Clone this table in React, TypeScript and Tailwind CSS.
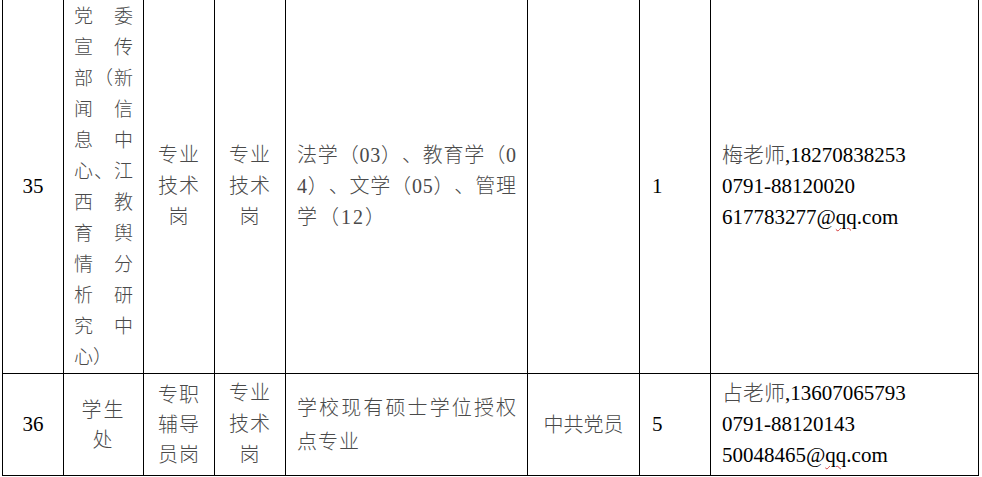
import type { ReactNode } from "react";

const zh = "text-[#4a4a4a] font-light";

function Cell({ children, className = "" }: { children?: ReactNode; className?: string }) {
  return (
    <div className={`flex items-center border-l border-b border-black ${className}`}>
      {children}
    </div>
  );
}

// stacked short lines, centred in a narrow column
function Stack({ lines, lead = "leading-[31px]" }: { lines: string[]; lead?: string }) {
  return (
    <div className={`w-full text-center text-[20px] tracking-[1px] ${lead} ${zh}`}>
      {lines.map((l) => (
        <div key={l}>{l}</div>
      ))}
    </div>
  );
}

// a full line spread char by char across the cell, as Word distributes it
function Spread({ text }: { text: string }) {
  return (
    <div className="flex justify-between whitespace-nowrap">
      {Array.from(text).map((c, i) => (
        <span key={i}>{c}</span>
      ))}
    </div>
  );
}

function Contact({ name, mobile, phone, mail }: { name: string; mobile: string; phone: string; mail: string }) {
  return (
    <div className="text-[21px] leading-[31px] text-black">
      <div>
        <span className={zh}>{name}</span>,{mobile}
      </div>
      <div>{phone}</div>
      <div>
        {mail}@
        <span className="underline decoration-wavy decoration-[#d23a3a] decoration-1 underline-offset-[3px]">qq</span>
        .com
      </div>
    </div>
  );
}

export default function App() {
  const deptLines = ["党委", "宣传", "部（新", "闻信", "息中", "心、江", "西教", "育舆", "情分", "析研", "究中"];

  return (
    <div className="w-[982px] h-[477px] bg-white pl-[2px] font-['Liberation_Serif','Noto_Sans_CJK_SC',serif]">
      <div className="grid w-[977px] grid-cols-[61px_80px_71px_71px_242px_112px_71px_269px] grid-rows-[374px_102px]">
        {/* row 35 */}
        <Cell className="justify-center text-[21px]">35</Cell>
        <Cell className="px-[10px]">
          <div className={`w-full text-[19px] leading-[31px] ${zh}`}>
            {deptLines.map((l) => (
              <Spread key={l} text={l} />
            ))}
            <div>心）</div>
          </div>
        </Cell>
        <Cell>
          <Stack lines={["专业", "技术", "岗"]} />
        </Cell>
        <Cell>
          <Stack lines={["专业", "技术", "岗"]} />
        </Cell>
        <Cell className="px-[11px]">
          <div className={`w-full text-[20px] leading-[31px] ${zh}`}>
            <Spread text="法学（03）、教育学（0" />
            <Spread text="4）、文学（05）、管理" />
            <div className="tracking-[2px]">学（12）</div>
          </div>
        </Cell>
        <Cell />
        <Cell className="pl-[12px] text-[21px]">1</Cell>
        <Cell className="border-r pl-[11px]">
          <Contact name="梅老师" mobile="18270838253" phone="0791-88120020" mail="617783277" />
        </Cell>

        {/* row 36 */}
        <Cell className="justify-center text-[21px]">36</Cell>
        <Cell>
          <div className={`w-full text-center text-[20px] tracking-[2px] leading-[30px] ${zh}`}>
            <div>学生</div>
            <div>处</div>
          </div>
        </Cell>
        <Cell>
          <Stack lines={["专职", "辅导", "员岗"]} lead="leading-[30px]" />
        </Cell>
        <Cell>
          <Stack lines={["专业", "技术", "岗"]} />
        </Cell>
        <Cell className="px-[11px]">
          <div className={`w-full text-[20px] leading-[34px] ${zh}`}>
            <Spread text="学校现有硕士学位授权" />
            <div className="tracking-[1px]">点专业</div>
          </div>
        </Cell>
        <Cell className={`justify-center text-[20px] ${zh}`}>中共党员</Cell>
        <Cell className="pl-[12px] text-[21px]">5</Cell>
        <Cell className="border-r pl-[11px]">
          <Contact name="占老师" mobile="13607065793" phone="0791-88120143" mail="50048465" />
        </Cell>
      </div>
    </div>
  );
}
